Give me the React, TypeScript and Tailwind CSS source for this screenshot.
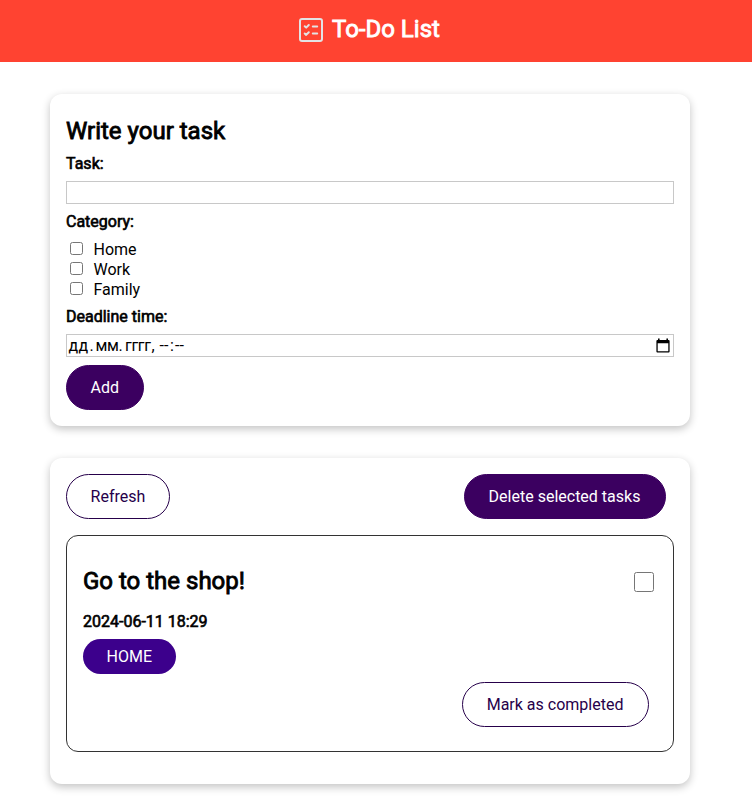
import React from "react";

const strokeSm = "relative top-px font-normal [-webkit-text-stroke:0.63px_currentColor]";
const strokeLg = "relative -top-px font-normal [-webkit-text-stroke:0.86px_currentColor]";
const card =
  "w-[640px] rounded-xl bg-white px-4 shadow-[0_3px_8px_rgba(0,0,0,0.24)]";
const solid =
  "block h-[45px] rounded-full border border-[#3b0060] bg-[#3b0060] pl-[23.6px] text-white";
const outline =
  "block h-[45px] rounded-full border border-[#26004a] bg-white pl-[23.6px] text-[#26004a]";

function ListIcon() {
  return (
    <svg
      className="h-6 w-6"
      viewBox="0 0 24 24"
      fill="none"
      stroke="#e3e3e3"
      strokeWidth="2"
      strokeLinecap="round"
      strokeLinejoin="round"
    >
      <rect x="1" y="1" width="22" height="22" rx="2" />
      <path d="M5.7 8.2 7.2 9.6 9.8 7M13.8 8.5H18.2M5.7 15.5 7.2 16.9 9.8 14.3M13.8 15.5H18.2" />
    </svg>
  );
}

function CalendarIcon() {
  return (
    <svg className="h-[15px] w-[14px]" viewBox="0 0 14 15">
      <path
        fill="#000"
        d="M2 .5H3.6V1.9H10.4V.5H12V1.9H12.6Q13.6 1.9 13.6 2.9V13.6Q13.6 14.6 12.6 14.6H1.4Q.4 14.6.4 13.6V2.9Q.4 1.9 1.4 1.9H2ZM1.7 5.2V13.3H12.3V5.2Z"
      />
    </svg>
  );
}

export default function App() {
  return (
    <div className="min-h-[805px] bg-white font-['Roboto','Noto_Sans',sans-serif] text-base leading-5 text-black">
      <header className="flex h-[62px] items-center bg-[#ff4331] pb-0.5 pl-[299px] text-white">
        <ListIcon />
        <h1 className={`ml-[9px] text-2xl leading-7 ${strokeLg}`}>To-Do List</h1>
      </header>
      <main className="ml-[50px] flex w-[640px] flex-col gap-8 pt-8">
        <form className={`h-[332px] pt-6 ${card}`}>
          <h2 className={`text-2xl leading-7 ${strokeLg}`}>Write your task</h2>
          <label className={`mt-[7px] block ${strokeSm}`}>Task:</label>
          <input className="mt-2 block h-[23px] w-full border border-[#c8c8c8] px-0.5" />
          <p className={`mt-[7px] ${strokeSm}`}>Category:</p>
          <div className="mt-2">
            {["Home", "Work", "Family"].map((name) => (
              <label key={name} className="flex h-5 items-center">
                <input type="checkbox" className="mr-[10.5px] mb-[2px] ml-1 h-[13px] w-[13px]" />
                <span className="pt-0.5">{name}</span>
              </label>
            ))}
          </div>
          <p className={`mt-[7px] ${strokeSm}`}>Deadline time:</p>
          <div className="mt-2 flex h-[23px] items-center justify-between border border-[#c8c8c8] pr-[3px] pl-[1.5px]">
            <div className="flex">
              <span className="w-[21px] tracking-[0.3px]">дд</span>
              <span className="w-[6px]">.</span>
              <span className="w-[23px] tracking-[-0.3px]">мм</span>
              <span className="w-[6.5px]">.</span>
              <span className="w-[26.5px] tracking-[-0.3px]">гггг</span>
              <span className="w-[8px]">,</span>
              <span className="w-[10.5px]">--</span>
              <span className="w-[5px]">:</span>
              <span>--</span>
            </div>
            <CalendarIcon />
          </div>
          <button type="button" className={`mt-2 pr-6 ${solid}`}>Add</button>
        </form>
        <section className={`h-[326px] pt-4 ${card}`}>
          <div className="flex justify-between pr-2">
            <button className={`pr-6 ${outline}`}>Refresh</button>
            <button className={`pr-[24.6px] ${solid}`}>Delete selected tasks</button>
          </div>
          <article className="mt-4 h-[217px] rounded-xl border border-[#333] pt-8 pr-6 pl-4">
            <div className="-mr-[5px] flex items-center justify-between">
              <h2 className={`text-2xl leading-7 ${strokeLg}`}>Go to the shop!</h2>
              <input type="checkbox" className="h-5 w-5" />
            </div>
            <p className={`mt-[15px] ${strokeSm}`}>2024-06-11 18:29</p>
            <span className="mt-2 block h-[35px] w-fit rounded-full bg-[#3c008c] pr-6 pl-[23.6px] leading-[35px] text-white">
              HOME
            </span>
            <button className={`mt-2 ml-auto pr-[24.6px] ${outline}`}>Mark as completed</button>
          </article>
        </section>
      </main>
    </div>
  );
}
